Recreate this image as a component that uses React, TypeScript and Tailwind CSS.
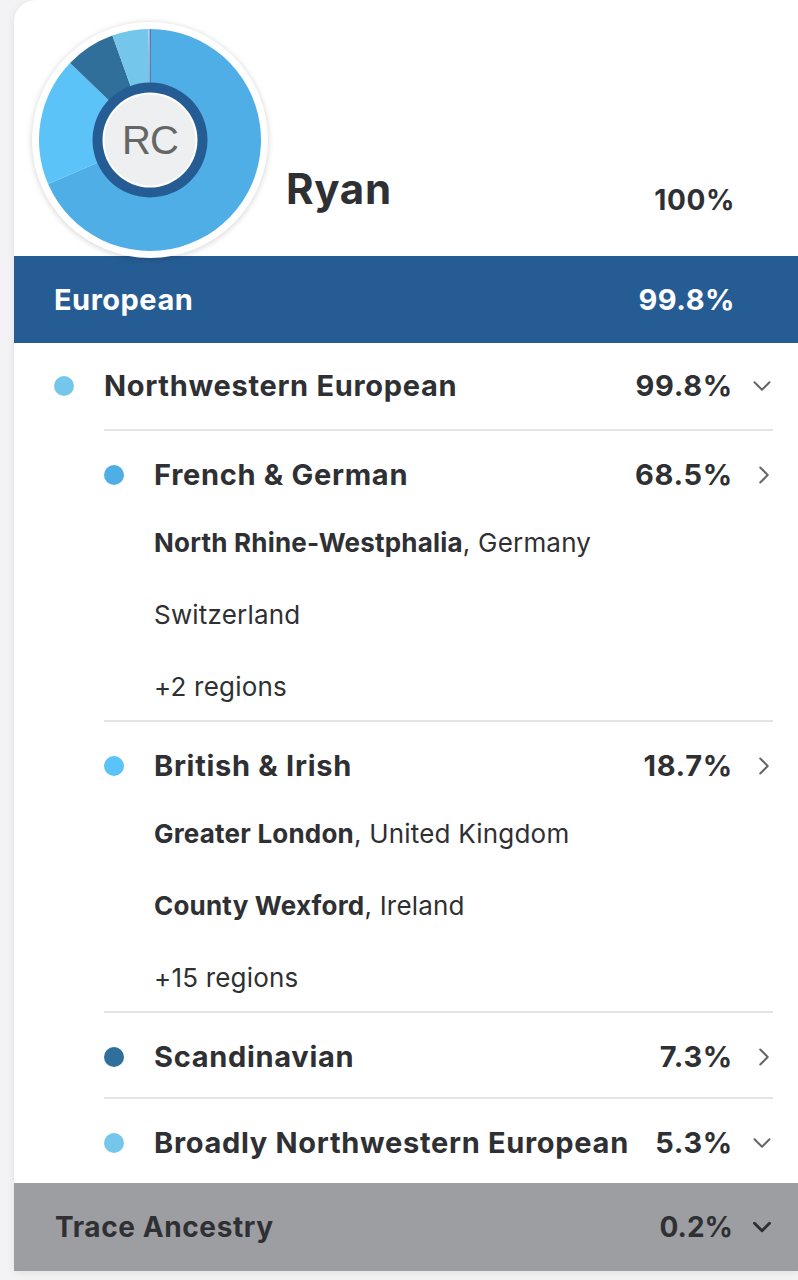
import { ChevronDown, ChevronRight } from 'lucide-react';

const font = { fontFamily: 'Inter, "Noto Sans", sans-serif' };

type Sub = { bold?: string; rest?: string };
type Region = { name: string; pct: string; dot: string; chevron: 'down' | 'right'; subs?: Sub[] };

const regions: Region[] = [
  {
    name: 'French & German',
    pct: '68.5%',
    dot: 'bg-[#4faee6]',
    chevron: 'right',
    subs: [{ bold: 'North Rhine-Westphalia', rest: ', Germany' }, { rest: 'Switzerland' }, { rest: '+2 regions' }],
  },
  {
    name: 'British & Irish',
    pct: '18.7%',
    dot: 'bg-[#5bc3f7]',
    chevron: 'right',
    subs: [
      { bold: 'Greater London', rest: ', United Kingdom' },
      { bold: 'County Wexford', rest: ', Ireland' },
      { rest: '+15 regions' },
    ],
  },
  { name: 'Scandinavian', pct: '7.3%', dot: 'bg-[#2f6f99]', chevron: 'right' },
  { name: 'Broadly Northwestern European', pct: '5.3%', dot: 'bg-[#74c6ea]', chevron: 'down' },
];

const slices = [
  { from: 0, to: 68.5, color: '#4faee6' },
  { from: 68.5, to: 87.2, color: '#5bc3f7' },
  { from: 87.2, to: 94.5, color: '#2f6f99' },
  { from: 94.5, to: 99.8, color: '#74c6ea' },
];

function arc(from: number, to: number, r: number, c: number) {
  const a1 = (from / 100) * Math.PI * 2;
  const a2 = (to / 100) * Math.PI * 2;
  const x1 = c + r * Math.sin(a1);
  const y1 = c - r * Math.cos(a1);
  const x2 = c + r * Math.sin(a2);
  const y2 = c - r * Math.cos(a2);
  const large = to - from > 50 ? 1 : 0;
  return `M${c} ${c} L${x1} ${y1} A${r} ${r} 0 ${large} 1 ${x2} ${y2} Z`;
}

function Donut() {
  return (
    <div className="relative z-10 w-[236px] h-[236px] rounded-full bg-white shadow-[0_1px_6px_rgba(0,0,0,0.18)] flex items-center justify-center shrink-0">
      <svg width="222" height="222" viewBox="0 0 222 222">
        {slices.map((s) => (
          <path key={s.from} d={arc(s.from, s.to, 111, 111)} fill={s.color} />
        ))}
        <line x1="111" y1="0" x2="111" y2="60" stroke="#5b4f9c" strokeWidth="1" />
        <circle cx="111" cy="111" r="57.5" fill="#265c94" />
        <circle cx="111" cy="111" r="47.5" fill="#ffffff" />
        <circle cx="111" cy="111" r="45.5" fill="#eeeff1" />
      </svg>
      <span
        className="absolute text-[40px] text-[#666] tracking-tight"
        style={{ fontFamily: '"Liberation Sans", Arial, sans-serif' }}
      >
        RC
      </span>
    </div>
  );
}

function Chevron({ dir, dark }: { dir: 'down' | 'right'; dark?: boolean }) {
  const cls = dark ? 'text-[#2f3033]' : 'text-[#666]';
  return (
    <div className="w-[40px] flex justify-end">
      {dir === 'down' ? (
        <ChevronDown size={30} strokeWidth={dark ? 2.4 : 1.6} className={`${cls} -mr-[4px]`} />
      ) : (
        <ChevronRight size={30} strokeWidth={1.6} className={`${cls} -mr-[6px]`} />
      )}
    </div>
  );
}

export default function App() {
  return (
    <div className="min-h-[1280px] bg-[#f3f3f5] pl-[14px]" style={font}>
      <div className="bg-white rounded-tl-[22px] text-[#2f3033] shadow-[0_2px_8px_rgba(0,0,0,0.08)]">
        <div className="h-[256px] flex items-start">
          <div className="ml-[18px] mt-[22px]">
            <Donut />
          </div>
          <div className="ml-[18px] mt-[164px] text-[42px] leading-[50px] font-bold tracking-[0.7px]">Ryan</div>
          <div className="flex-1" />
          <div className="mt-[184px] mr-[63px] text-[28px] leading-[32px] font-bold tracking-[0.6px]">100%</div>
        </div>

        <div className="h-[87px] bg-[#265c94] text-white flex items-center pl-[40px] pr-[63px] text-[29px] font-bold tracking-[0.5px]">
          <span>European</span>
          <span className="ml-auto">99.8%</span>
        </div>

        <div className="h-[86px] flex items-center pl-[40px] pr-[25px] text-[29px] font-bold tracking-[0.7px]">
          <span className="w-[20px] h-[20px] rounded-full bg-[#74c6ea]" />
          <span className="ml-[30px]">Northwestern European</span>
          <span className="ml-auto">99.8%</span>
          <Chevron dir="down" />
        </div>

        <div className="ml-[90px] mr-[25px]">
          {regions.map((r) => (
            <div key={r.name} className="border-t-2 border-[#e4e4e6]">
              <div className="h-[84px] pt-[4px] flex items-center text-[29px] font-bold tracking-[0.7px]">
                <span className={`w-[20px] h-[20px] rounded-full shrink-0 ${r.dot}`} />
                <span className="ml-[30px]">{r.name}</span>
                <span className="ml-auto">{r.pct}</span>
                <Chevron dir={r.chevron} />
              </div>
              {r.subs && (
                <div className="-mt-[8px] -mb-[3px] pl-[50px] text-[26px] leading-[72px] tracking-[0.2px]">
                  {r.subs.map((s, i) => (
                    <div key={i} className="h-[72px]">
                      {s.bold && <span className="font-bold">{s.bold}</span>}
                      <span>{s.rest}</span>
                    </div>
                  ))}
                </div>
              )}
            </div>
          ))}
        </div>

        <div className="h-[88px] bg-[#9d9ea2] flex items-center pl-[41px] pr-[25px] text-[28px] font-bold text-[#2f3033]">
          <span className="tracking-[0.6px]">Trace Ancestry</span>
          <span className="ml-auto">0.2%</span>
          <Chevron dir="down" dark />
        </div>
      </div>
    </div>
  );
}
